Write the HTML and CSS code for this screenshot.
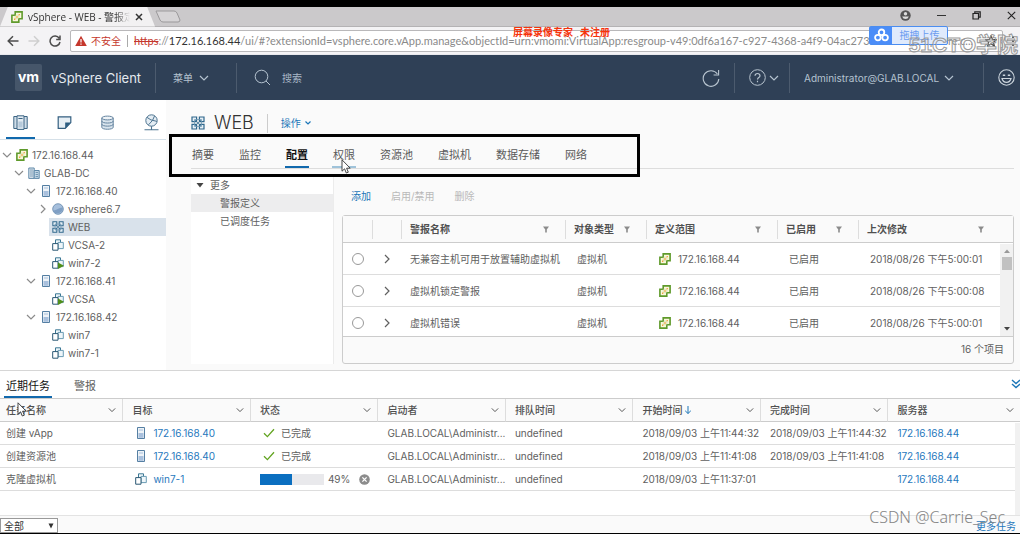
FILE: index.html
```html
<!DOCTYPE html>
<html lang="zh-CN">
<head>
<meta charset="utf-8">
<title>vSphere - WEB - 警报定义</title>
<link rel="stylesheet" href="styles.css">
</head>
<body>
<svg class="sprite" aria-hidden="true">
  <symbol id="vc" viewBox="0 0 12 12"><path d="M4.2.9h6.9v6.8H7.8v3.4H.9V4.2h3.3z" fill="#fbf7dc" stroke="#5f9a2b" stroke-width="1.6"/><path d="M4.2 4.2v3.5h3.6M7.8 7.7V4.2H4.2" fill="none" stroke="#c3d69b" stroke-width=".6"/><path d="M5.2 5.2h1.6v1.6H5.2zM7.6 3h1.3v1.3H7.6zM3 7.6h1.3v1.3H3z" fill="#f0a040"/></symbol>
  <symbol id="dc" viewBox="0 0 12 12"><path d="M.8 1h5.4v10.4H.8z" fill="#dfe8ef" stroke="#5f88a8"/><path d="M6.2 3.5h5v7.9h-5z" fill="#c3d7e5" stroke="#5f88a8"/><path d="M2 3h3M2 5h3M2 7h3M2 9h3M7.6 5.5h2.4M7.6 7.5h2.4M7.6 9.5h2.4" stroke="#5f88a8" stroke-width=".8"/></symbol>
  <symbol id="host" viewBox="0 0 12 12"><path d="M2.5.5h7v11h-7z" fill="#eef3f7" stroke="#557fa3"/><path d="M3.5 6h5v4.8h-5z" fill="#a9c0dd"/><path d="M4 3h4" stroke="#a9c0dd"/></symbol>
  <symbol id="pool" viewBox="0 0 12 12"><circle cx="6" cy="6" r="5.3" fill="#a6bfdc" stroke="#6286ab" stroke-width=".8"/><path d="M1 7.4C4 8 5 5 10.8 4.5A5.2 5.2 0 0 1 1 7.4z" fill="#7f9fc4"/></symbol>
  <symbol id="vapp" viewBox="0 0 14 14"><path d="M1 1h4.6v4.6H1zM8.4 1H13v4.6H8.4zM1 8.4h4.6V13H1zM8.4 8.4H13V13H8.4z" fill="#e6eff5" stroke="#2f678c" stroke-width="1.2"/><path d="M3.5 3.5h7v7h-7z" fill="none" stroke="#6d97b3" stroke-width=".8"/><path d="M4 4l6 6M10 4l-6 6" stroke="#3f7396" stroke-width=".8"/></symbol>
  <symbol id="vm" viewBox="0 0 12 12"><path d="M3.5.8h5v6h-5z" fill="#eef6fa" stroke="#3c7894"/><path d="M6 3.4h5.3v6.2H6z" fill="#eef6fa" stroke="#6a9bb3"/><path d="M.7 4.6H6v6.6H.7z" fill="#fff" stroke="#2b5873"/></symbol>
  <symbol id="vmon" viewBox="0 0 12 12"><use href="#vm"/><path d="M6 5.4 12 8.7 6 12z" fill="#4f8f1b"/></symbol>
  <symbol id="down" viewBox="0 0 10 10"><path d="M1 3l4 4 4-4" fill="none" stroke="currentColor" stroke-width="1.2"/></symbol>
  <symbol id="right" viewBox="0 0 10 10"><path d="M3 1l4 4-4 4" fill="none" stroke="currentColor" stroke-width="1.2"/></symbol>
  <symbol id="filter" viewBox="0 0 8 8"><path d="M1 1.5h6L4.8 4.6v3H3.2v-3z" fill="#8b8b8b"/></symbol>
  <symbol id="check" viewBox="0 0 12 10"><path d="M1 5.2 4.4 8.6 11 1.2" fill="none" stroke="#62a420" stroke-width="1.3"/></symbol>
  <symbol id="pointer" viewBox="0 0 10 15"><path d="M1 .8v11.4l2.6-2.4L5.3 14l2-.8L5.6 9.2H9.2z" fill="#fff" stroke="#333" stroke-width=".9"/></symbol>
</svg>

<div class="browser">
  <div class="tabstrip">
    <div class="page-tab">
      <svg class="i12"><use href="#vc"/></svg><span class="tab-title">vSphere - WEB - 警报定义</span>
      <button class="bare" aria-label="关闭标签页"><svg class="i8" viewBox="0 0 8 8"><path d="M1 1l6 6M7 1 1 7" stroke="#333" stroke-width="1.5"/></svg></button>
    </div>
    <button class="bare" aria-label="新标签页"><svg class="newtab" viewBox="0 0 26 13"><path d="M1 1h18q2 0 3 2l3 7q0 2-2 2H8q-2 0-3-2z" fill="#d6d4d6" stroke="#9b999b"/></svg></button>
    <div class="win">
      <button class="bare" aria-label="用户"><svg class="i11" viewBox="0 0 11 11"><circle cx="5.5" cy="5.5" r="5.2" fill="#555"/><circle cx="5.5" cy="3.8" r="1.7" fill="#ddd"/><path d="M2.2 6.5h6.6Q8 9 5.5 9T2.2 6.5z" fill="#ddd"/></svg></button>
      <button class="bare" aria-label="最小化"><svg class="i9" viewBox="0 0 9 9"><path d="M0 4.5h9" stroke="#333"/></svg></button>
      <button class="bare" aria-label="还原"><svg class="i9" viewBox="0 0 9 9"><path d="M1 2.5h5.5V8H1zM2.8 2.5V.8h5.4v5.4H6.5" fill="none" stroke="#222" stroke-width="1.2"/></svg></button>
      <button class="bare" aria-label="关闭"><svg class="i9" viewBox="0 0 9 9"><path d="M.8.8l7.4 7.4M8.2.8.8 8.2" stroke="#222" stroke-width="1.1"/></svg></button>
    </div>
  </div>
  <div class="toolbar">
    <button class="bare" aria-label="后退"><svg class="i12" viewBox="0 0 12 12"><path d="M11.5 6H1.5M6 1.2 1.2 6 6 10.8" fill="none" stroke="#4c4c4c" stroke-width="1.5"/></svg></button>
    <button class="bare" aria-label="前进"><svg class="i12" viewBox="0 0 12 12"><path d="M.5 6h10M6 1.2 10.8 6 6 10.8" fill="none" stroke="#cfcfcf" stroke-width="1.5"/></svg></button>
    <button class="bare" aria-label="重新加载"><svg class="i12" viewBox="0 0 12 12"><path d="M10.2 3.2A5 5 0 1 0 11 7M11 .6v3.9H7.2" fill="none" stroke="#4c4c4c" stroke-width="1.5"/></svg></button>
    <div class="address">
      <svg class="i12" viewBox="0 0 12 12"><path d="M6 .8 11.8 11H.2z" fill="#c5372c"/><path d="M6 4v3.6M6 8.6v1.2" stroke="#fff" stroke-width="1.2"/></svg>
      <span class="unsafe">不安全</span>
      <span class="url"><s>https</s>://<b>172.16.168.44</b>/ui/#?extensionId=vsphere.core.vApp.manage&amp;objectId=urn:vmomi:VirtualApp:resgroup-v49:0df6a167-c927-4368-a4f9-04ac273867048c~vsphere.c...</span>
      <svg class="i12" viewBox="0 0 12 12"><path d="M6 .8 7.5 4.4l3.9.3-3 2.5 1 3.8L6 9 2.6 11l1-3.8-3-2.5 3.9-.3z" fill="none" stroke="#444" stroke-width="1.2"/></svg>
    </div>
    <button class="bare" aria-label="菜单"><svg class="i12" viewBox="0 0 12 12"><path d="M5 1h2v2H5zM5 5h2v2H5zM5 9h2v2H5z" fill="#555"/></svg></button>
  </div>
</div>

<header class="appbar">
  <span class="vm-logo">vm</span>
  <span class="brand">vSphere Client</span>
  <button class="bare menu">菜单 <svg class="i10"><use href="#down"/></svg></button>
  <label class="search"><svg class="i17" viewBox="0 0 17 17"><circle cx="7.5" cy="7.5" r="6.3" fill="none" stroke="#b5c3d0"/><path d="M12 12l4 4" stroke="#b5c3d0"/></svg><input type="text" placeholder="搜索" aria-label="搜索"></label>
  <button class="bare refresh" aria-label="刷新"><svg class="i18" viewBox="0 0 18 18"><path d="M15.4 5A7.8 7.8 0 1 0 16.8 10M16.6 1v5h-5" fill="none" stroke="#b9c5d0" stroke-width="1.1"/></svg></button>
  <button class="bare help" aria-label="帮助"><svg class="i17" viewBox="0 0 17 17"><circle cx="8.5" cy="8.5" r="7.8" fill="none" stroke="#b9c5d0"/><path d="M6 6.8Q6.2 4.5 8.5 4.5T11 6.7Q11 7.8 9.8 8.5T8.5 10.5M8.5 11.8v1.4" fill="none" stroke="#b9c5d0" stroke-width="1.2"/></svg><svg class="i10"><use href="#down"/></svg></button>
  <button class="bare user">Administrator@GLAB.LOCAL <svg class="i10"><use href="#down"/></svg></button>
  <button class="bare smile" aria-label="反馈"><svg class="i17" viewBox="0 0 17 17"><circle cx="8.5" cy="8.5" r="7.7" fill="none" stroke="#ccd5dd" stroke-width="1.1"/><path d="M4 9.5h9Q12 13.3 8.5 13.3T4 9.5z" fill="none" stroke="#ccd5dd" stroke-width="1.2"/><path d="M4.8 6.3h2.4M9.8 6.3h2.4" stroke="#ccd5dd" stroke-width="1.6"/></svg></button>
</header>

<main class="main">
  <aside class="sidebar">
    <nav class="views">
      <button class="bare on" aria-label="主机和集群"><svg class="i15" viewBox="0 0 15 15"><path d="M.8 1.5h4v12h-4zM10.2 1.5h4v12h-4z" fill="#cfdde8" stroke="#3c6584"/><path d="M4 .8h7v13.6H4z" fill="#e3ecf3" stroke="#3c6584"/><path d="M5.4 3.5h4.2" stroke="#3c6584"/><path d="M5.4 6.5h4.2v6H5.4z" fill="#b6cadb"/></svg></button>
      <button class="bare" aria-label="虚拟机和模板"><svg class="i15" viewBox="0 0 15 15"><path d="M1.2 1.8h12.6v5.8l-5.6 5.8h-7z" fill="#e7eff5" stroke="#345f80" stroke-width="1.2"/><path d="M13.8 7.6H8.2v5.8z" fill="#2d5d80"/></svg></button>
      <button class="bare" aria-label="存储"><svg class="i15" viewBox="0 0 15 15"><path d="M1.8 3v9.3c0 2.6 11.4 2.6 11.4 0V3z" fill="#d9e4ed" stroke="#6584a0"/><ellipse cx="7.5" cy="3" rx="5.7" ry="1.9" fill="#eef3f7" stroke="#6584a0"/><path d="M1.8 6.1c0 2.6 11.4 2.6 11.4 0M1.8 9.2c0 2.6 11.4 2.6 11.4 0" fill="none" stroke="#6584a0"/></svg></button>
      <button class="bare" aria-label="网络"><svg class="i17" viewBox="0 0 17 17"><circle cx="8.5" cy="6.5" r="5.7" fill="#e4edf4" stroke="#4e7490"/><path d="M4 3.4Q7 6.5 14 7.4M11.5 2Q10.5 6.5 5.5 10.8" fill="none" stroke="#4e7490"/><path d="M8.5 12.2v3.5M1.5 15.7h14" stroke="#4e7490" stroke-width="1.1"/></svg></button>
    </nav>
    <ul class="tree">
      <li class="l0"><svg class="i10"><use href="#down"/></svg><svg class="i12"><use href="#vc"/></svg><span>172.16.168.44</span></li>
      <li class="l1"><svg class="i10"><use href="#down"/></svg><svg class="i12"><use href="#dc"/></svg><span>GLAB-DC</span></li>
      <li class="l2"><svg class="i10"><use href="#down"/></svg><svg class="i12"><use href="#host"/></svg><span>172.16.168.40</span></li>
      <li class="l3"><svg class="i10"><use href="#right"/></svg><svg class="i12"><use href="#pool"/></svg><span>vsphere6.7</span></li>
      <li class="leaf sel"><svg class="i12"><use href="#vapp"/></svg><span>WEB</span></li>
      <li class="leaf"><svg class="i12"><use href="#vm"/></svg><span>VCSA-2</span></li>
      <li class="leaf"><svg class="i12"><use href="#vmon"/></svg><span>win7-2</span></li>
      <li class="l2"><svg class="i10"><use href="#down"/></svg><svg class="i12"><use href="#host"/></svg><span>172.16.168.41</span></li>
      <li class="leaf"><svg class="i12"><use href="#vmon"/></svg><span>VCSA</span></li>
      <li class="l2"><svg class="i10"><use href="#down"/></svg><svg class="i12"><use href="#host"/></svg><span>172.16.168.42</span></li>
      <li class="leaf"><svg class="i12"><use href="#vm"/></svg><span>win7</span></li>
      <li class="leaf"><svg class="i12"><use href="#vm"/></svg><span>win7-1</span></li>
    </ul>
  </aside>

  <section class="content">
    <div class="title">
      <svg class="i14"><use href="#vapp"/></svg><h1>WEB</h1>
      <button class="bare actions">操作 <svg class="i8" viewBox="0 0 8 8"><path d="M1.5 2.5 4 5l2.5-2.5" fill="none" stroke="#1b76b8" stroke-width="1.2"/></svg></button>
    </div>
    <nav class="tabs">
      <button class="bare">摘要</button><button class="bare">监控</button><button class="bare on">配置</button><button class="bare hover">权限</button><button class="bare">资源池</button><button class="bare">虚拟机</button><button class="bare">数据存储</button><button class="bare">网络</button>
    </nav>
    <div class="panes">
      <ul class="subnav">
        <li class="group"><svg class="i8" viewBox="0 0 8 8"><path d="M.5 2h7L4 6.5z" fill="#444"/></svg>更多</li>
        <li class="sel">警报定义</li>
        <li>已调度任务</li>
      </ul>
      <div class="alarms">
        <div class="commands"><button class="bare link">添加</button><button class="bare" disabled>启用/禁用</button><button class="bare" disabled>删除</button></div>
        <div class="grid">
          <div class="viewport">
            <table class="alarm-table">
              <colgroup><col class="c-s"><col class="c-s"><col class="c-name"><col class="c-mid"><col class="c-scope"><col class="c-mid"><col></colgroup>
              <thead><tr><th></th><th></th>
                <th><div class="th">警报名称<svg class="i8"><use href="#filter"/></svg></div></th>
                <th><div class="th">对象类型<svg class="i8"><use href="#filter"/></svg></div></th>
                <th><div class="th">定义范围<svg class="i8"><use href="#filter"/></svg></div></th>
                <th><div class="th">已启用<svg class="i8"><use href="#filter"/></svg></div></th>
                <th><div class="th last">上次修改<svg class="i8"><use href="#filter"/></svg></div></th></tr></thead>
              <tbody>
                <tr><td><input type="radio" name="alarm" aria-label="选择警报 1"></td><td><button class="bare" aria-label="展开"><svg class="i10"><use href="#right"/></svg></button></td><td>无兼容主机可用于放置辅助虚拟机</td><td>虚拟机</td><td><span class="obj"><svg class="i12"><use href="#vc"/></svg>172.16.168.44</span></td><td>已启用</td><td>2018/08/26 下午5:00:01</td></tr>
                <tr><td><input type="radio" name="alarm" aria-label="选择警报 2"></td><td><button class="bare" aria-label="展开"><svg class="i10"><use href="#right"/></svg></button></td><td>虚拟机锁定警报</td><td>虚拟机</td><td><span class="obj"><svg class="i12"><use href="#vc"/></svg>172.16.168.44</span></td><td>已启用</td><td>2018/08/26 下午5:00:08</td></tr>
                <tr><td><input type="radio" name="alarm" aria-label="选择警报 3"></td><td><button class="bare" aria-label="展开"><svg class="i10"><use href="#right"/></svg></button></td><td>虚拟机错误</td><td>虚拟机</td><td><span class="obj"><svg class="i12"><use href="#vc"/></svg>172.16.168.44</span></td><td>已启用</td><td>2018/08/26 下午5:00:01</td></tr>
              </tbody>
            </table>
            <div class="scrollbar"><svg class="i8" viewBox="0 0 8 8"><path d="M1 6h6L4 2.5z" fill="#999"/></svg><i></i><svg class="i8 end" viewBox="0 0 8 8"><path d="M1 2h6L4 5.5z" fill="#444"/></svg></div>
          </div>
          <div class="count">16 个项目</div>
        </div>
      </div>
    </div>
    <div class="marker"></div>
    <svg class="pointer p-tab"><use href="#pointer"/></svg>
  </section>
</main>

<section class="tasks">
  <div class="task-tabs">
    <button class="bare on">近期任务</button><button class="bare">警报</button>
    <button class="bare collapse" aria-label="折叠"><svg class="i10" viewBox="0 0 10 10"><path d="M1 1l4 3.6L9 1M1 5l4 3.6L9 5" fill="none" stroke="#1b76b8" stroke-width="1.4"/></svg></button>
  </div>
  <table class="task-table">
    <colgroup><col class="t-first"><col class="t-col"><col class="t-col"><col class="t-col"><col class="t-col"><col class="t-col"><col class="t-col"><col></colgroup>
    <thead><tr>
      <th><div class="th">任务名称<svg class="i8"><use href="#down"/></svg></div></th>
      <th><div class="th">目标<svg class="i8"><use href="#down"/></svg></div></th>
      <th><div class="th">状态<svg class="i8"><use href="#down"/></svg></div></th>
      <th><div class="th">启动者<svg class="i8"><use href="#down"/></svg></div></th>
      <th><div class="th">排队时间<svg class="i8"><use href="#down"/></svg></div></th>
      <th><div class="th"><span class="sorted">开始时间<svg class="i8" viewBox="0 0 8 8"><path d="M4 0v7.4M1.2 4.8 4 7.5l2.8-2.7" fill="none" stroke="#1b76b8"/></svg></span><svg class="i8"><use href="#down"/></svg></div></th>
      <th><div class="th">完成时间<svg class="i8"><use href="#down"/></svg></div></th>
      <th><div class="th">服务器<svg class="i8"><use href="#down"/></svg></div></th></tr></thead>
    <tbody>
      <tr><td>创建 vApp</td><td><span class="obj"><svg class="i12"><use href="#host"/></svg><a href="#">172.16.168.40</a></span></td><td><span class="obj"><svg class="i12"><use href="#check"/></svg>已完成</span></td><td>GLAB.LOCAL\Administr...</td><td>undefined</td><td>2018/09/03 上午11:44:32</td><td>2018/09/03 上午11:44:32</td><td><a href="#">172.16.168.44</a></td></tr>
      <tr><td>创建资源池</td><td><span class="obj"><svg class="i12"><use href="#host"/></svg><a href="#">172.16.168.40</a></span></td><td><span class="obj"><svg class="i12"><use href="#check"/></svg>已完成</span></td><td>GLAB.LOCAL\Administr...</td><td>undefined</td><td>2018/09/03 上午11:41:08</td><td>2018/09/03 上午11:41:08</td><td><a href="#">172.16.168.44</a></td></tr>
      <tr><td>克隆虚拟机</td><td><span class="obj"><svg class="i12"><use href="#vm"/></svg><a href="#">win7-1</a></span></td><td class="running"><span class="progress"><span class="bar"><span style="width:50%"></span></span>49%<button class="bare" aria-label="取消"><svg class="i11" viewBox="0 0 11 11"><circle cx="5.5" cy="5.5" r="5.3" fill="#8c8c8c"/><path d="M3.4 3.4l4.2 4.2M7.6 3.4 3.4 7.6" stroke="#fff" stroke-width="1.3"/></svg></button></span></td><td>GLAB.LOCAL\Administr...</td><td>undefined</td><td>2018/09/03 上午11:37:01</td><td></td><td><a href="#">172.16.168.44</a></td></tr>
    </tbody>
  </table>
  <div class="task-foot">
    <div class="picker"><select aria-label="任务筛选"><option>全部</option></select><svg class="i8" viewBox="0 0 8 8"><path d="M1.5 1.5h5L4 6.5z" fill="#333"/></svg></div>
    <a href="#">更多任务</a>
  </div>
  <div class="task-scroll"></div>
  <svg class="pointer p-task"><use href="#pointer"/></svg>
  <span class="csdn">CSDN @Carrie_Sec</span>
</section>

<span class="recorder">屏幕录像专家&nbsp;&nbsp; 未注册</span>
<div class="upload"><span class="cloud"><svg class="i15" viewBox="0 0 15 15"><g fill="none" stroke="#fff" stroke-width="1.8"><circle cx="7.5" cy="4.3" r="2.8"/><circle cx="3.9" cy="9.6" r="2.8"/><circle cx="11.1" cy="9.6" r="2.8"/></g></svg></span><span class="drop">拖拽上传</span></div>
<span class="school">51CTO学院</span>
</body>
</html>
```
FILE: styles.css
```css
* { box-sizing: border-box; }
body {
  margin: 0;
  height: 100vh;
  display: flex;
  flex-direction: column;
  position: relative;
  overflow: hidden;
  border-top: 7px solid #000;
  border-bottom: 1px solid #000;
  background: #fff;
  color: #606060;
  font: 10px/16px Inter, "Noto Sans CJK SC", sans-serif;
}
svg { display: block; flex: none; }
.sprite { position: absolute; width: 0; height: 0; }
.i8 { width: 8px; height: 8px; }
.i9 { width: 9px; height: 9px; }
.i10 { width: 10px; height: 10px; }
.i11 { width: 11px; height: 11px; }
.i12 { width: 12px; height: 12px; }
.i14 { width: 14px; height: 14px; }
.i15 { width: 15px; height: 15px; }
.i17 { width: 17px; height: 17px; }
.i18 { width: 18px; height: 18px; }
.bare {
  padding: 0;
  border: 0;
  background: none;
  color: inherit;
  font: inherit;
  display: flex;
  align-items: center;
  flex: none;
  white-space: nowrap;
}
a { color: #1f78bd; text-decoration: none; }

/* Browser frame */
.browser { flex: none; font-family: "Open Sans", "Noto Sans CJK SC", sans-serif; }
.tabstrip { display: flex; align-items: center; height: 20px; background: #cbc9cb; border-bottom: 1px solid #b4b2b4; }
.page-tab {
  display: flex;
  align-items: center;
  gap: 5px;
  width: 155px;
  height: 20px;
  padding: 0 12px 0 11px;
  background: #f2f1f2;
  clip-path: polygon(8px 0, 147px 0, 100% 100%, 0 100%);
  color: #333;
}
.tab-title { flex: 1; overflow: hidden; white-space: nowrap; mask-image: linear-gradient(90deg, #000 85%, transparent); }
.newtab { width: 26px; height: 13px; }
.win { display: flex; align-items: center; gap: 26px; margin-left: auto; padding-right: 4px; height: 16px; align-self: flex-start; }
.toolbar { display: flex; align-items: center; gap: 9px; height: 28px; padding: 2px 1px 2px 7px; background: #f4f3f5; border-bottom: 1px solid #e8e8ec; }
.address {
  display: flex;
  align-items: center;
  gap: 4px;
  flex: 1;
  min-width: 0;
  height: 22px;
  padding: 0 5px 0 4px;
  border: 1px solid #b9b8ba;
  border-radius: 2px;
  background: #fff;
  font-size: 11px;
}
.unsafe { color: #c5372c; padding-right: 6px; border-right: 1px solid #aaa; line-height: 12px; font-size: 10px; white-space: nowrap; }
.url { flex: 1; min-width: 0; overflow: hidden; white-space: nowrap; color: #8a8a8a; padding-left: 2px; font-family: Lato, sans-serif; }
.url s { color: #c5372c; }
.url b { color: #333; font-weight: 400; }
.toolbar > .bare:last-child { margin-left: -5px; }

/* Application header */
.appbar { display: flex; align-items: center; flex: none; height: 45px; padding-left: 15px; background: #2f4056; color: #b5c3d0; }
.vm-logo { width: 27px; height: 27px; border-radius: 2px; background: #46566a; color: #fff; font: 700 14px/25px Inter, sans-serif; text-align: center; }
.brand { margin-left: 9px; color: #e4e9ee; font-size: 13px; }
.appbar .menu, .appbar .search, .appbar .help, .appbar .user, .appbar .smile { height: 30px; border-left: 1px solid #4c5b6e; }
.menu { gap: 6px; width: 81px; padding-left: 17px; margin-left: 14px; }
.search { display: flex; align-items: center; gap: 9px; flex: 1; padding-left: 17px; }
.search input { flex: 1; min-width: 0; border: 0; outline: 0; background: none; color: inherit; font: inherit; }
.search input::placeholder { color: #a9b8c6; opacity: 1; }
.refresh { padding-right: 14px; }
.help { width: 55px; padding-left: 14px; gap: 3px; }
.user { width: 194px; padding-left: 14px; gap: 5px; }
.smile { padding: 0 5px 0 14px; }

/* Inventory */
.main { display: flex; flex: 1; min-height: 0; border-bottom: 1px solid #d6d6d6; background: #fafafa; }
.sidebar { width: 166px; flex: none; background: #fff; }
.views { display: flex; justify-content: space-between; height: 40px; padding: 7px 0 0 6px; border-bottom: 1px solid #d5e0e8; }
.views .bare { width: 29px; justify-content: center; border-bottom: 2px solid transparent; }
.views .on { border-color: #1169ad; }
.tree { list-style: none; margin: 0; padding: 6px 0 0; }
.tree li { display: flex; align-items: center; gap: 4px; height: 18px; white-space: nowrap; }
.l0 { padding-left: 2px; }
.l1 { padding-left: 14px; }
.l2 { padding-left: 26px; }
.l3 { padding-left: 38px; }
.leaf { margin-left: 49px; padding-left: 3px; }
.tree .sel { background: #d9e2eb; }
.tree .i10 { color: #8b8b8b; }

/* Object page */
.content { position: relative; display: flex; flex-direction: column; flex: 1; min-width: 0; padding: 0 6px 6px 25px; }
.title { display: flex; align-items: center; height: 46px; flex: none; }
h1 { margin: 0 13px 0 9px; color: #333; font: 300 18px/20px Inter, sans-serif; }
.actions { gap: 3px; height: 19px; padding-left: 13px; border-left: 1px solid #ccc; color: #1b76b8; }
.tabs { display: flex; gap: 23px; flex: none; height: 23px; border-bottom: 1px solid #ddd; color: #5a5a5a; font-size: 11px; }
.tabs .bare { padding: 0 1px 2px; border-bottom: 2px solid transparent; }
.tabs .on { color: #111; font-weight: 700; border-color: #1169ad; }
.tabs .hover { border-color: #9fc3da; }
.panes { display: flex; gap: 8px; flex: 1; min-height: 0; padding-top: 7px; }
.subnav { list-style: none; width: 143px; flex: none; margin: 0; padding: 0; background: #fff; border-right: 1px solid #ececec; }
.subnav li { height: 18px; line-height: 18px; padding-left: 29px; }
.subnav .group { display: flex; align-items: center; gap: 6px; padding-left: 5px; }
.subnav .sel { background: #ededee; }
.alarms { display: flex; flex-direction: column; flex: 1; min-width: 0; }
.commands { display: flex; gap: 20px; flex: none; height: 39px; padding: 0 9px; color: #b9b9b9; }
.link { color: #1b76b8; }
.grid { display: flex; flex-direction: column; flex: 1; min-height: 0; border: 1px solid #ccc; border-radius: 3px; }
.viewport { position: relative; flex: 1; min-height: 0; overflow: hidden; background: #fff; }
table { width: 100%; table-layout: fixed; border-collapse: separate; border-spacing: 0; }
th, td { padding: 0; text-align: left; white-space: nowrap; overflow: hidden; }
th { color: #505050; font-weight: 600; background: #fafafa; border-bottom: 1px solid #ccc; }
.th { display: flex; align-items: center; justify-content: space-between; }
.c-s { width: 29px; }
.c-name { width: 164px; }
.c-mid { width: 81px; }
.c-scope { width: 131px; }
.alarm-table th { height: 27px; }
.alarm-table .th { height: 19px; padding: 0 15px 0 9px; }
.alarm-table .last { padding-right: 28px; }
.alarm-table th + th { background: linear-gradient(#ddd, #ddd) 0 50% / 1px 19px no-repeat #fafafa; }
.alarm-table td { height: 32px; padding-left: 12px; border-bottom: 1px solid #ddd; }
.alarm-table td:nth-child(3), .alarm-table td:first-child { padding-left: 9px; }
.alarm-table td:nth-child(2) { padding-left: 10px; }
.obj { display: flex; align-items: center; gap: 6px; }
.alarm-table .obj { padding-left: 1px; gap: 7px; }
input[type="radio"] { appearance: none; display: block; width: 12px; height: 12px; margin: 0; border: 1px solid #999; border-radius: 50%; background: #fff; }
.scrollbar { position: absolute; top: 28px; right: 0; bottom: 0; width: 13px; display: flex; flex-direction: column; align-items: center; gap: 2px; padding: 3px 0; background: #f1f1f1; }
.scrollbar i { width: 10px; height: 13px; background: #c1c1c1; }
.scrollbar .end { margin-top: auto; }
.count { flex: none; height: 27px; padding: 0 9px; border-top: 1px solid #ccc; line-height: 25px; text-align: right; }
.marker { position: absolute; top: 34px; left: 3px; width: 471px; height: 43px; border: 3px solid #000; }
.pointer { position: absolute; width: 10px; height: 15px; }
.p-tab { top: 59px; left: 175px; }

/* Recent tasks */
.tasks { position: relative; display: flex; flex-direction: column; flex: none; height: 162px; }
.task-tabs { display: flex; gap: 20px; flex: none; height: 28px; padding-left: 4px; border-bottom: 1px solid #ccc; font-size: 11px; }
.task-tabs .bare { padding: 4px 2px 0; border-bottom: 2px solid transparent; }
.task-tabs .on { color: #111; border-color: #1169ad; }
.task-tabs .collapse { margin-left: auto; padding: 0; width: 9px; }
.t-first { width: 12%; }
.t-col { width: 12.5%; }
.task-table { flex: none; }
.task-table th { height: 23px; padding: 0 6px 0 9px; font-weight: 500; }
.task-table th + th { border-left: 1px solid #ddd; }
.task-table th:first-child, .task-table td:first-child { padding-left: 6px; }
.task-table td { height: 23px; padding-left: 10px; border-bottom: 1px solid #ddd; }
.task-table td:nth-child(2), .task-table td:nth-child(3) { padding-left: 13px; }
.task-table .running:nth-child(3) { padding-left: 10px; }
.sorted { display: flex; align-items: center; gap: 2px; }
.progress { display: flex; align-items: center; gap: 4px; }
.bar { width: 64px; height: 11px; background: #e9e9ec; }
.bar span { display: block; height: 11px; background: #0b6fc0; }
.progress .bare { margin-left: 5px; }
.task-foot { display: flex; align-items: flex-end; justify-content: space-between; margin-top: auto; height: 18px; padding-right: 4px; border-top: 1px solid #e3e3e3; background: #fafafa; }
.task-foot a { line-height: 14px; }
.picker { position: relative; }
.picker svg { position: absolute; right: 3px; top: 4px; pointer-events: none; }
.picker select { appearance: none; display: block; width: 58px; height: 15px; padding: 0 3px; border: 1px solid #999; border-radius: 0; background: #fff; color: #333; font: inherit; line-height: 12px; }
.task-scroll { position: absolute; top: 52px; right: 0; bottom: 18px; width: 5px; background: #f1f1f1; }
.p-task { top: 31px; left: 17px; }
.csdn { position: absolute; right: 15px; bottom: 6px; color: #858585; font: 300 16px/20px "Noto Sans", sans-serif; }

/* Floating overlays */
.recorder { position: absolute; top: 17px; left: 513px; color: #f5330c; font-weight: 700; }
.upload { position: absolute; top: 19px; right: 72px; display: flex; width: 79px; height: 19px; border: 1px solid #4b8df0; border-radius: 2px; background: #dfeafc; }
.cloud { display: flex; align-items: center; justify-content: center; width: 22px; background: #4b8df8; }
.drop { flex: 1; color: #6b9cf0; text-align: center; }
.school { position: absolute; top: 24px; right: 2px; color: transparent; font: 700 21px/28px "Liberation Sans", "Noto Sans CJK SC", sans-serif; -webkit-text-stroke: 1px #9a9a9a; }
```
